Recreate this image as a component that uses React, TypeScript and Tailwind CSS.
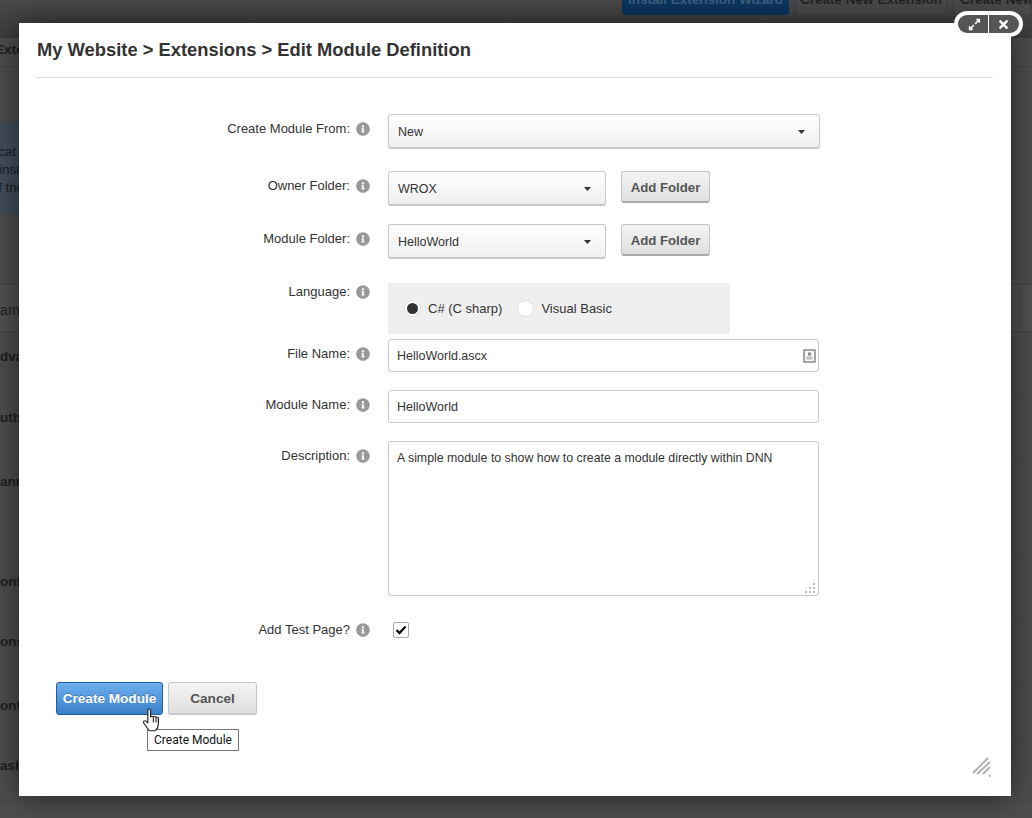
import type { ReactNode } from 'react';
import { FaInfoCircle, FaExpandAlt, FaTimes } from 'react-icons/fa';

const bgRows = [
  { text: 'dva', h: 'h-[61px]' },
  { text: 'uth', h: 'h-[64px]' },
  { text: 'ann', h: 'h-[100px]' },
  { text: 'onf', h: 'h-[60px]' },
  { text: 'ons', h: 'h-[64px]' },
  { text: 'ont', h: 'h-[60px]' },
  { text: 'ash', h: 'h-[60px]' },
];

function Background() {
  return (
    <div className="h-[818px] overflow-hidden bg-[#4d4d4d] text-[13.5px] font-bold text-[#1e1e1e]">
      <div className="flex h-[38px] items-start justify-end gap-[6px] bg-gradient-to-b from-[#4a4a4a] to-[#3c3c3c] pl-[622px]">
        <div className="-mt-[8px] h-[23px] w-[167px] shrink-0 rounded-[3px] bg-[#0c3560] text-center leading-[16px] text-[#3f5f80]">Install Extension Wizard</div>
        <div className="-mt-[8px] h-[23px] w-[152px] shrink-0 rounded-[3px] border border-[#3e3e3e] bg-[#4a4a4a] text-center leading-[14px] text-[#222]">Create New Extension</div>
        <div className="-mt-[8px] h-[23px] flex-1 overflow-hidden whitespace-nowrap rounded-[3px] border border-[#3e3e3e] bg-[#4a4a4a] pl-[6px] leading-[14px] text-[#222]">Create New Module</div>
      </div>
      <div className="flex h-[29px] items-start justify-start border-b border-[#434343] bg-[#4d4d4d] pt-[2px]">
        <span className="-ml-[5px]">Exte</span>
      </div>
      <div className="h-[56px]" />
      <div className="flex h-[90px] w-[900px] flex-col justify-center gap-[1px] border-y border-[#3a4b5c] bg-[#414e5a] pt-[2px] text-[13.5px] font-normal leading-[17px] text-[#161f27]">
        <span className="-ml-[5px]">lcat</span>
        <span className="-ml-[1px]">inst</span>
        <span className="-ml-[2px]">f the</span>
      </div>
      <div className="h-[71px]" />
      <div className="flex h-[48px] items-center justify-between border-y border-[#424242] bg-[#515151] pt-[4px] text-[14px] font-normal">
        <span className="-ml-[10px]">Name</span>
        <span className="-mt-[4px] h-full w-[13px] border-l border-[#424242]" />
      </div>
      {bgRows.map((row) => (
        <div key={row.text} className={`border-b border-[#484848] pt-[17px] leading-[16px] ${row.h}`}>
          {row.text}
        </div>
      ))}
    </div>
  );
}

function Info() {
  return <FaInfoCircle className="h-[14px] w-[14px] text-[#999]" />;
}

function Row({ label, labelTop, className, children }: { label: string; labelTop: string; className: string; children: ReactNode }) {
  return (
    <div className={`flex items-start ${className}`}>
      <div className={`flex w-[333px] items-center justify-end gap-[6px] text-[13px] ${labelTop}`}>
        <span className="leading-[14px]">{label}</span>
        <Info />
      </div>
      <div className="ml-[18px] flex items-start">{children}</div>
    </div>
  );
}

function Select({ value, width }: { value: string; width: string }) {
  return (
    <div className={`flex h-[35px] items-center justify-between rounded-[3px] border border-[#c8c8c8] border-b-2 bg-gradient-to-b from-white to-[#efefef] pl-[9px] pr-[14px] pt-[2px] ${width}`}>
      <span>{value}</span>
      <svg width="7" height="4" viewBox="0 0 7 4"><path d="M0 0h7L3.5 4z" fill="#333" /></svg>
    </div>
  );
}

function AddFolder() {
  return (
    <button className="ml-[15px] h-[32px] w-[89px] rounded-[3px] border border-[#c4c4c4] border-b-2 border-b-[#aaa] bg-gradient-to-b from-[#f4f4f4] to-[#dfdfdf] pt-[2px] text-[13.2px] font-bold text-[#555]">
      Add Folder
    </button>
  );
}

function Dialog() {
  return (
    <div className="absolute left-[19px] top-[23px] h-[773px] w-[992px] bg-white px-[18px] text-[12.5px] text-[#333] shadow-[0_0_28px_rgba(0,0,0,0.55)]">
      <div className="flex h-[55px] items-center border-b border-[#ddd] text-[18.35px] font-bold">
        My Website &gt; Extensions &gt; Edit Module Definition
      </div>

      <Row label="Create Module From:" labelTop="pt-[8px]" className="mt-[36px]">
        <Select value="New" width="w-[432px]" />
      </Row>
      <Row label="Owner Folder:" labelTop="pt-[8px]" className="mt-[22px]">
        <Select value="WROX" width="w-[218px]" />
        <AddFolder />
      </Row>
      <Row label="Module Folder:" labelTop="pt-[8px]" className="mt-[18px]">
        <Select value="HelloWorld" width="w-[218px]" />
        <AddFolder />
      </Row>
      <Row label="Language:" labelTop="pt-[2px]" className="mt-[24px]">
        <div className="flex h-[51px] w-[342px] items-center bg-[#efefef] pl-[16px] text-[13px]">
          <span className="flex h-[17px] w-[17px] items-center justify-center rounded-full border border-[#ddd] bg-white">
            <span className="h-[11px] w-[11px] rounded-full bg-[#333]" />
          </span>
          <span className="ml-[7px]">C# (C sharp)</span>
          <span className="ml-[15px] h-[17px] w-[17px] rounded-full border border-[#ddd] bg-white" />
          <span className="ml-[7px]">Visual Basic</span>
        </div>
      </Row>
      <Row label="File Name:" labelTop="pt-[8px]" className="mt-[5px]">
        <div className="flex h-[33px] w-[431px] items-center justify-between rounded-[3px] border border-[#c8c8c8] pl-[8px] pr-[2px]">
          <span className="pt-[1px]">HelloWorld.ascx</span>
          <svg width="13" height="14" viewBox="0 0 13 14">
            <rect x="1" y="1" width="11" height="12" fill="#f4f4f4" stroke="#888" strokeWidth="1.5" />
            <rect x="5" y="3.5" width="3" height="3" fill="#888" />
            <rect x="3.5" y="7.5" width="6" height="3" fill="#bbb" />
          </svg>
        </div>
      </Row>
      <Row label="Module Name:" labelTop="pt-[8px]" className="mt-[18px]">
        <div className="flex h-[33px] w-[431px] items-center rounded-[3px] border border-[#c8c8c8] pl-[8px] pt-[1px]">HelloWorld</div>
      </Row>
      <Row label="Description:" labelTop="pt-[8px]" className="mt-[18px]">
        <div className="relative h-[155px] w-[431px] rounded-[3px] border border-[#c8c8c8] pl-[8px] pt-[9px] text-[12.33px] leading-[14px]">
          A simple module to show how to create a module directly within DNN
          <svg width="12" height="12" viewBox="0 0 12 12" className="absolute bottom-[1px] right-[1px]" fill="#bbb">
            <rect x="8" y="1" width="2" height="2" />
            <rect x="4" y="5" width="2" height="2" />
            <rect x="8" y="5" width="2" height="2" />
            <rect x="0" y="9" width="2" height="2" />
            <rect x="4" y="9" width="2" height="2" />
            <rect x="8" y="9" width="2" height="2" />
          </svg>
        </div>
      </Row>
      <Row label="Add Test Page?" labelTop="pt-[1px]" className="mt-[26px]">
        <span className="ml-[5px] flex h-[16px] w-[16px] items-center justify-center rounded-[2px] border border-[#aaa] bg-white">
          <svg width="12" height="10" viewBox="0 0 12 10"><path d="M1.5 5l3 3 6-6.5" fill="none" stroke="#111" strokeWidth="2.4" /></svg>
        </span>
      </Row>

      <div className="ml-[19px] mt-[44px] flex gap-[5px]">
        <button className="h-[33px] w-[107px] rounded-[3px] border border-[#1f5f9f] bg-gradient-to-b from-[#6db0ee] to-[#3a7fcb] pt-[1px] text-[13.6px] font-bold text-white [text-shadow:0_-1px_0_rgba(0,0,0,0.25)]">
          Create Module
        </button>
        <button className="h-[33px] w-[89px] rounded-[3px] border border-[#c8c8c8] border-b-2 bg-gradient-to-b from-[#f4f4f4] to-[#dfdfdf] pt-[2px] text-[13.6px] font-bold text-[#555]">
          Cancel
        </button>
      </div>

      {/* resize grip */}
      <svg width="20" height="20" viewBox="0 0 20 20" className="absolute bottom-[19px] right-[19px]" stroke="#b0b0b0" strokeWidth="2">
        <path d="M1 16L16 1M5 17L18 5M11 17L18 10M17 18L18.5 19.5" />
      </svg>

      {/* tooltip and cursor sit over the buttons */}
      <div className="absolute left-[128px] top-[706px] flex h-[22px] w-[92px] items-center justify-center border border-[#767676] bg-white font-['Roboto',sans-serif] text-[12px] text-[#111]">
        Create Module
      </div>
      <svg width="18" height="24" viewBox="0 0 17 25" preserveAspectRatio="none" className="absolute left-[123px] top-[685px]">
        <path
          d="M5.5 2.2c0-1.6 2.6-1.6 2.6 0v7.3c.3-1.3 2.4-1.2 2.6.2.3-1.1 2.3-1 2.5.3.4-.9 2.2-.6 2.3.7v5.8c0 3-1.7 6-2.8 7.2H6.8L1.6 15.6c-1-1.6.9-3 2.2-1.8l1.7 1.8z"
          fill="#fff"
          stroke="#222"
          strokeWidth="1.1"
          strokeLinejoin="round"
        />
        <path d="M10.7 10v5M13.2 10.5v4.5M15.5 11.2V15" stroke="#222" strokeWidth="1" />
      </svg>
    </div>
  );
}

function DialogControls() {
  return (
    <div className="absolute left-[954px] top-[11px] flex h-[26px] w-[69px] overflow-hidden rounded-[13px] border-4 border-white bg-white">
      <span className="flex w-[30px] items-center justify-center bg-[#555] pl-[2px] text-white">
        <FaExpandAlt className="h-[13px] w-[13px]" />
      </span>
      <span className="ml-[1px] flex flex-1 items-center justify-center bg-[#555] pr-[2px] text-white">
        <FaTimes className="h-[13px] w-[13px]" />
      </span>
    </div>
  );
}

export default function App() {
  return (
    <div className="relative h-[818px] w-[1032px] overflow-hidden font-['Liberation_Sans',Arial,sans-serif]">
      <Background />
      <Dialog />
      <DialogControls />
    </div>
  );
}
